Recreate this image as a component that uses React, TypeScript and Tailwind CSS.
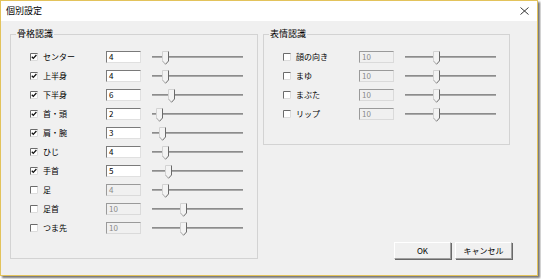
import React from "react";

type Row = { label: string; on: boolean; v: number };

const skeleton: Row[] = [
  { label: "センター", on: true, v: 4 },
  { label: "上半身", on: true, v: 4 },
  { label: "下半身", on: true, v: 6 },
  { label: "首・頭", on: true, v: 2 },
  { label: "肩・腕", on: true, v: 3 },
  { label: "ひじ", on: true, v: 4 },
  { label: "手首", on: true, v: 5 },
  { label: "足", on: false, v: 4 },
  { label: "足首", on: false, v: 10 },
  { label: "つま先", on: false, v: 10 },
];

const face: Row[] = [
  { label: "顔の向き", on: false, v: 10 },
  { label: "まゆ", on: false, v: 10 },
  { label: "まぶた", on: false, v: 10 },
  { label: "リップ", on: false, v: 10 },
];

function Check({ on }: { on: boolean }) {
  return (
    <svg width="8" height="8" viewBox="0 0 8 8" className="shrink-0">
      <rect x="0" y="0" width="8" height="8" fill="#fff" />
      <path d="M0.5 8V0.5H8" fill="none" stroke="#6b6b6b" strokeWidth="1" />
      <path d="M7.5 0.5V7.5H0.5" fill="none" stroke="#dcdcdc" strokeWidth="1" />
      {on && (
        <path d="M1.8 3.8L3.3 5.4L6.4 2" fill="none" stroke="#111" strokeWidth="1.3" />
      )}
    </svg>
  );
}

function Thumb() {
  return (
    <svg width="7" height="14" viewBox="0 0 7 14">
      <polygon points="0.5,0.5 6.5,0.5 6.5,10 3.5,13.3 0.5,10" fill="#f3f3f3" />
      <path d="M0.5 10V0.5H6.5" fill="none" stroke="#d2d2d2" strokeWidth="1" />
      <path d="M0.5 10L3.5 13.3" fill="none" stroke="#a8a8a8" strokeWidth="1" />
      <path d="M6.5 0.5V10L3.5 13.3" fill="none" stroke="#6a6a6a" strokeWidth="1" />
    </svg>
  );
}

function Slider({ v }: { v: number }) {
  return (
    <div className="relative w-[91px] h-[19px]">
      <div className="absolute left-0 right-0 top-[9px] h-[2px] bg-[#a9a9a9] border-t border-[#8c8c8c]" />
      <div className="absolute top-[4px]" style={{ left: Math.round(2 + 2.9 * v - 3.5) }}>
        <Thumb />
      </div>
    </div>
  );
}

function SettingRow({ row }: { row: Row }) {
  return (
    <div className="flex items-center h-[19px] pl-[19px]">
      <Check on={row.on} />
      <span className="ml-[5px] w-[63px] text-[8px] leading-none text-black">{row.label}</span>
      <div
        className={
          row.on
            ? "w-[35px] h-[12px] bg-white border-t border-l border-t-[#7a7a7a] border-l-[#7a7a7a] border-r border-b border-r-[#e0e0e0] border-b-[#e0e0e0] text-[8px] leading-[10px] pl-[2px] text-black"
            : "w-[35px] h-[12px] bg-[#f0f0f0] border-t border-l border-t-[#9a9a9a] border-l-[#9a9a9a] border-r border-b border-r-[#dadada] border-b-[#dadada] text-[8px] leading-[10px] pl-[2px] text-[#8a8a8a]"
        }
      >
        {row.v}
      </div>
      <div className="ml-[11px]">
        <Slider v={row.v} />
      </div>
    </div>
  );
}

function Group({ title, rows, width }: { title: string; rows: Row[]; width: string }) {
  return (
    <fieldset className={`${width} border border-[#d3d3d3] pt-[7px] pb-[21px]`}>
      <legend className="ml-[5px] px-[1px] text-[9px] leading-[12px] text-black">{title}</legend>
      {rows.map((r, i) => (
        <SettingRow key={i} row={r} />
      ))}
    </fieldset>
  );
}

function Button({ children }: { children: React.ReactNode }) {
  return (
    <div className="w-[57px] h-[17px] flex items-center justify-center bg-[#f0f0f0] border border-t-white border-l-white border-r-[#a0a0a0] border-b-[#a0a0a0] shadow-[1px_1px_0_#696969] text-[8px] text-black">
      {children}
    </div>
  );
}

export default function App() {
  return (
    <div className="w-[541px] h-[279px] bg-white font-['Noto_Sans_CJK_JP','Noto_Sans_CJK_SC',sans-serif]">
      <div className="w-[538px] h-[276px] flex flex-col border border-[#e3c35b] shadow-[2px_2px_2px_rgba(0,0,0,0.55)]">
        <div className="h-[20px] bg-white flex items-center justify-between pl-[5px] pr-[8px]">
          <span className="text-[9px] text-black">個別設定</span>
          <svg width="9" height="8" viewBox="0 0 9 8">
            <path d="M0.5 0.5L8.5 7.5M8.5 0.5L0.5 7.5" stroke="#222" strokeWidth="0.9" />
          </svg>
        </div>
        <div className="flex-1 bg-[#f0f0f0] pl-[9px] pt-[7px]">
          <div className="flex">
            <Group title="骨格認識" rows={skeleton} width="w-[248px]" />
            <div className="ml-[5px] w-[249px] flex flex-col">
              <Group title="表情認識" rows={face} width="w-[247px]" />
              <div className="mt-auto flex justify-end gap-[4px]">
                <Button>OK</Button>
                <Button>キャンセル</Button>
              </div>
            </div>
          </div>
        </div>
      </div>
    </div>
  );
}
